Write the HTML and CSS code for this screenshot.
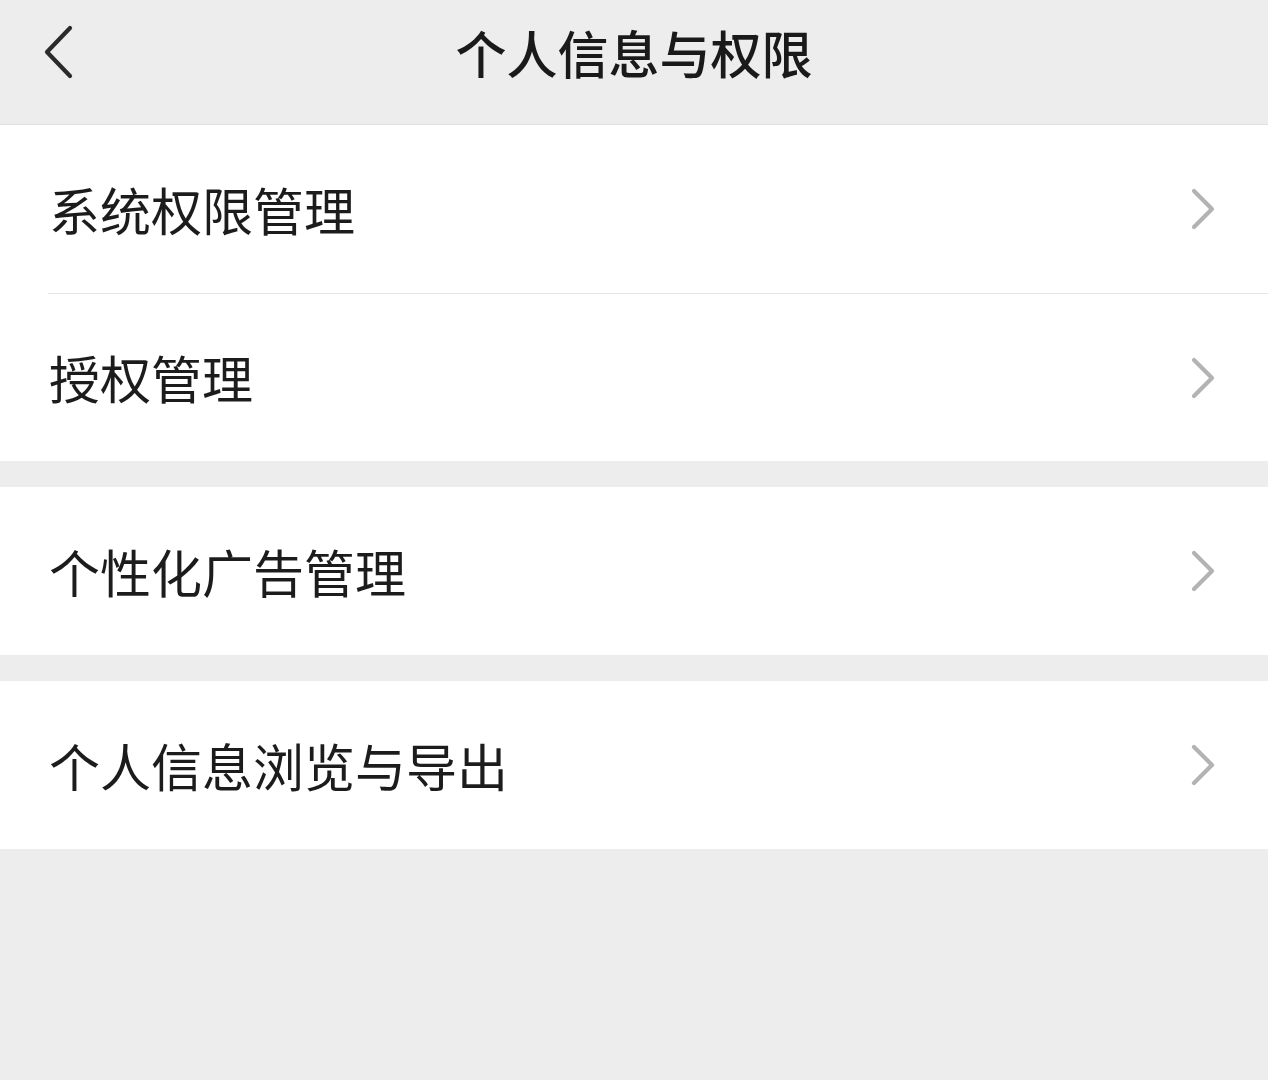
FILE: index.html
```html
<!DOCTYPE html>
<html lang="zh-CN">
<head>
<meta charset="utf-8">
<title>个人信息与权限</title>
<link rel="stylesheet" href="styles.css">
</head>
<body>
<div class="page">
  <header class="topbar">
    <span class="back">
      <svg width="34" height="54" viewBox="0 0 34 54"><polyline points="28,3 5,27 28,51" fill="none" stroke="#2b2b2b" stroke-width="4.2" stroke-linecap="round" stroke-linejoin="round"/></svg>
    </span>
    <h1 class="title">个人信息与权限</h1>
  </header>

  <section class="group">
    <div class="row">
      <span class="label">系统权限管理</span>
      <span class="arrow"><svg width="26" height="42" viewBox="0 0 26 42"><polyline points="3,3 21,21 3,39" fill="none" stroke="#b3b3b3" stroke-width="4.2" stroke-linecap="round" stroke-linejoin="round"/></svg></span>
    </div>
    <div class="row">
      <span class="label">授权管理</span>
      <span class="arrow"><svg width="26" height="42" viewBox="0 0 26 42"><polyline points="3,3 21,21 3,39" fill="none" stroke="#b3b3b3" stroke-width="4.2" stroke-linecap="round" stroke-linejoin="round"/></svg></span>
    </div>
  </section>

  <section class="group">
    <div class="row">
      <span class="label">个性化广告管理</span>
      <span class="arrow"><svg width="26" height="42" viewBox="0 0 26 42"><polyline points="3,3 21,21 3,39" fill="none" stroke="#b3b3b3" stroke-width="4.2" stroke-linecap="round" stroke-linejoin="round"/></svg></span>
    </div>
  </section>

  <section class="group">
    <div class="row">
      <span class="label">个人信息浏览与导出</span>
      <span class="arrow"><svg width="26" height="42" viewBox="0 0 26 42"><polyline points="3,3 21,21 3,39" fill="none" stroke="#b3b3b3" stroke-width="4.2" stroke-linecap="round" stroke-linejoin="round"/></svg></span>
    </div>
  </section>
</div>
</body>
</html>
```
FILE: styles.css
```css
html, body {
  margin: 0;
  padding: 0;
  background: #ededed;
}
.page {
  width: 1268px;
  min-height: 1080px;
  background: #ededed;
  font-family: "Noto Sans CJK SC", "Noto Sans", sans-serif;
  color: #1c1c1c;
}
.topbar {
  position: relative;
  height: 124px;
  border-bottom: 1px solid #e0e0e0;
  display: flex;
  align-items: center;
  justify-content: center;
  background: #ededed;
}
.back {
  position: absolute;
  left: 42px;
  top: 25px;
  display: block;
  line-height: 0;
}
.title {
  margin: 0;
  margin-top: -20px;
  font-size: 51px;
  font-weight: 500;
  letter-spacing: 0;
  color: #1a1a1a;
}
.group {
  background: #fff;
  margin-bottom: 26px;
}
.row {
  height: 168px;
  display: flex;
  align-items: center;
  justify-content: space-between;
  padding-left: 49px;
  padding-right: 51px;
  box-sizing: border-box;
  position: relative;
}
.row + .row {
  border-top: 1px solid #e6e6e6;
  margin-left: 48px;
  padding-left: 1px;
}
.label {
  font-size: 51px;
  font-weight: 400;
  line-height: 1;
  color: #1c1c1c;
}
.arrow {
  line-height: 0;
  display: block;
}
```
